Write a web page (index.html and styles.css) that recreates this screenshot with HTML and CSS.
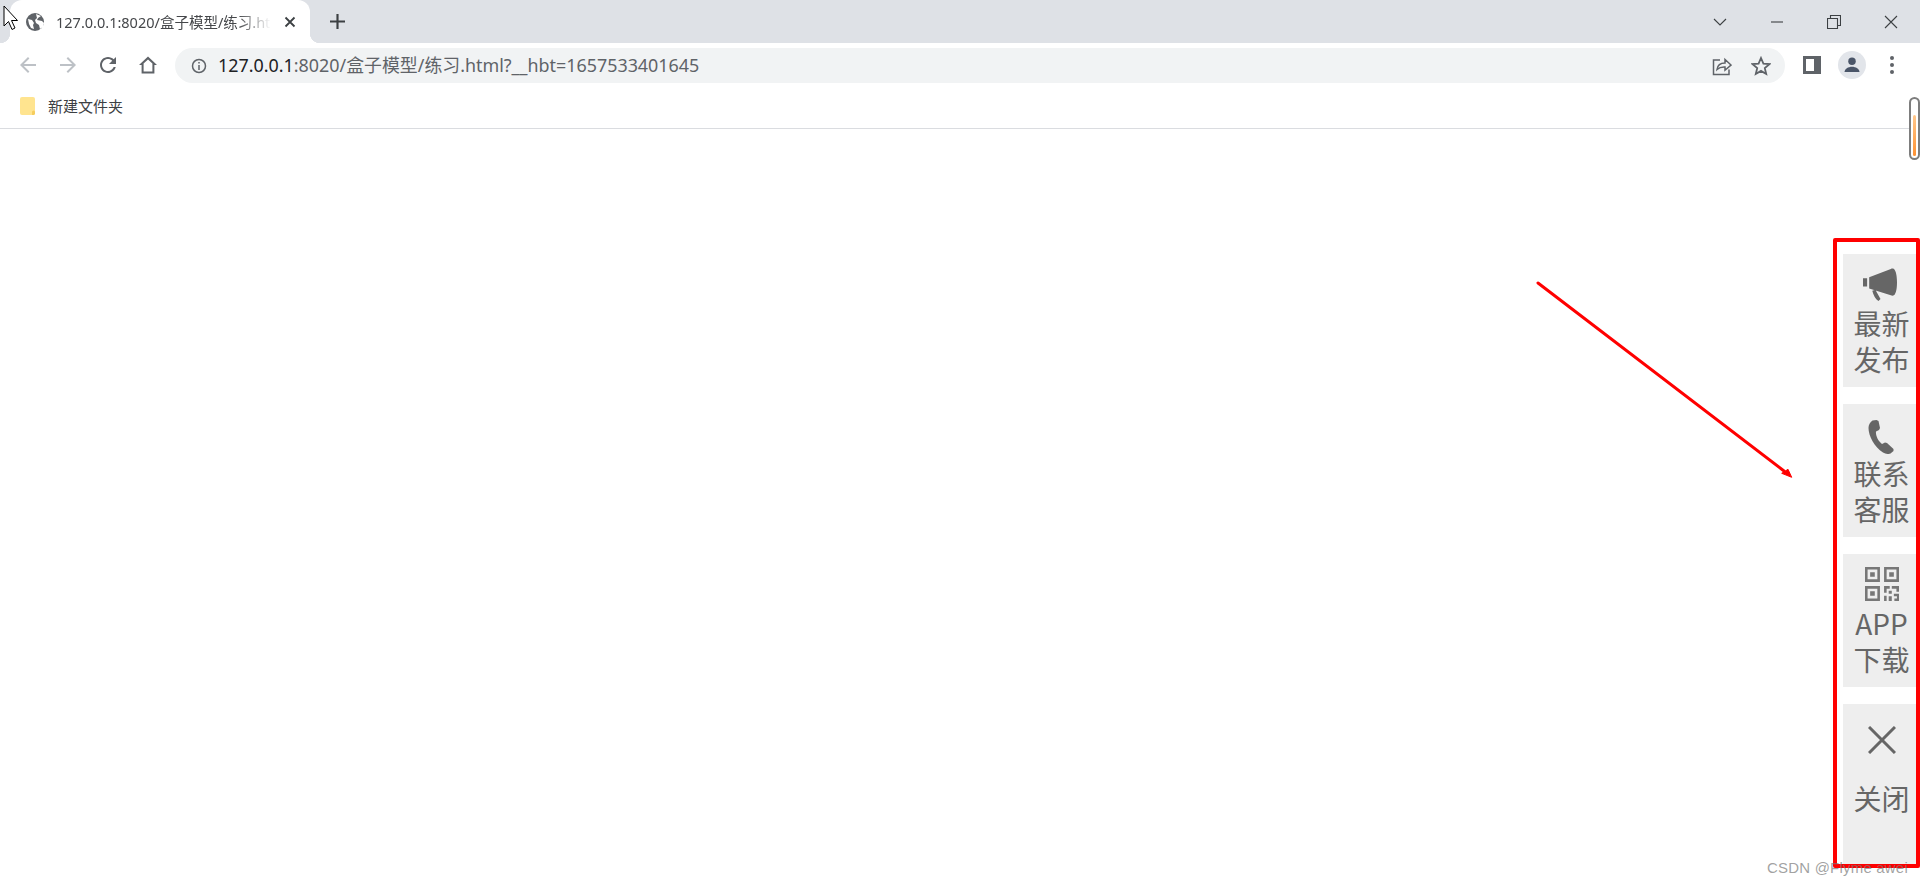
FILE: index.html
```
<!DOCTYPE html>
<html lang="zh">
<head>
<meta charset="utf-8">
<title>练习</title>
<link rel="stylesheet" href="styles.css">
</head>
<body>
<header class="chrome">
  <div class="tabstrip">
    <div class="tab">
      <svg class="favicon" viewBox="0 0 18 18"><circle cx="9" cy="9" r="9" fill="#5f6368"/><path d="M2 6l4 1 2 3-1 2 1 4-3-1-2-4zM10 1l5 2-3 2-1 2 5 1 2 2-1 4-3 2-1-4-3-2-1-3 2-2z" fill="#fff"/></svg>
      <span class="tab-title">127.0.0.1:8020/盒子模型/练习.html</span>
      <svg class="tab-close" viewBox="0 0 12 12"><path d="M1.5 1.5l9 9M10.5 1.5l-9 9"/></svg>
    </div>
    <svg class="newtab" viewBox="0 0 14 14"><path d="M7 0v14M0 7h14"/></svg>
    <div class="winctl">
      <svg class="winicon" viewBox="0 0 14 8"><path d="M1 1l6 6 6-6"/></svg>
      <svg class="winicon" viewBox="0 0 14 14"><path d="M1 7h12"/></svg>
      <svg class="winicon" viewBox="0 0 14 14"><path d="M.5 3.500h10v10H.5zM3.500 3.500v-3h10v10h-3"/></svg>
      <svg class="winicon" viewBox="0 0 14 14"><path d="M1 1l12 12M13 1L1 13"/></svg>
    </div>
  </div>
  <div class="toolbar">
    <svg class="tb-icon dim" viewBox="0 0 24 24"><path d="M20 11H7.83l5.59-5.59L12 4l-8 8 8 8 1.41-1.41L7.83 13H20v-2z"/></svg>
    <svg class="tb-icon dim" viewBox="0 0 24 24"><path d="M4 11h12.17l-5.59-5.59L12 4l8 8-8 8-1.41-1.41L16.17 13H4v-2z"/></svg>
    <svg class="tb-icon" viewBox="0 0 24 24"><path d="M17.65 6.35C16.2 4.9 14.21 4 12 4c-4.42 0-7.99 3.58-7.99 8s3.57 8 7.99 8c3.73 0 6.84-2.55 7.73-6h-2.08c-.82 2.33-3.04 4-5.65 4-3.31 0-6-2.69-6-6s2.69-6 6-6c1.66 0 3.14.69 4.22 1.78L13 11h7V4l-2.35 2.35z"/></svg>
    <svg class="tb-icon" viewBox="0 0 24 24"><path d="M12 3.5L3 12h2.6v8.5h12.8V12H21zM12 6.4l4.4 4.2v7.9H7.6v-7.9z"/></svg>
    <div class="omnibox">
      <svg class="info" viewBox="0 0 16 16"><circle cx="8" cy="8" r="6.5"/><path d="M8 7v5M8 4v1.6"/></svg>
      <span class="url"><span class="host">127.0.0.1</span>:8020/盒子模型/练习.html?__hbt=1657533401645</span>
      <svg class="omni-icon share" viewBox="0 0 20 20"><path d="M8 4H1.5v14.5H17v-5M5 13.5c.5-4 3.5-6.5 8-6.5V3.5l6 5.5-6 5.2V11c-3.5-.2-6 .6-8 2.500z"/></svg>
      <svg class="omni-icon star" viewBox="0 0 20 20"><path d="M10 2l2.400 5.600 6 .5-4.600 4 1.400 5.900L10 14.900 4.800 18l1.400-5.900-4.600-4 6-.5z"/></svg>
    </div>
    <div class="sidepanel"></div>
    <div class="avatar"><svg viewBox="0 0 24 24"><circle cx="12" cy="7.500" r="4.500"/><path d="M3 20.500c0-4 4.500-6.500 9-6.500s9 2.500 9 6.500z"/></svg></div>
    <div class="dots"><i></i><i></i><i></i></div>
  </div>
  <div class="bookmarks">
    <svg class="folder" viewBox="0 0 15 18"><path d="M2 0h11a2 2 0 0 1 2 2v14a2 2 0 0 1-2 2H2a2 2 0 0 1-2-2V2a2 2 0 0 1 2-2z" fill="#ffe48f"/><path d="M12 18v-3a1.500 1.500 0 0 1 3 0v2l-1 1z" fill="#f6cd5e"/></svg>
    <span class="bm-label">新建文件夹</span>
  </div>
</header>
<main class="page">
  <aside class="rail">
    <div class="card">
      <svg class="card-icon horn" viewBox="0 0 33 33"><path d="M0 10h4v8H0zM6 9L27 1c1-.5 2-.6 3 0 2 1.500 3 7 3 13s-1 11-3 12.500c-1 .6-2 .5-3 0L6 20zM9 22l3-1 5 9-2 2c-3-2-5-6-6-10z"/></svg>
      <div class="card-text">最新<br>发布</div>
    </div>
    <div class="card">
      <svg class="card-icon phone" viewBox="0 0 25 34"><path d="M4 .5L8 0l2 1 1.500 7-1 2-3 1.500c-.5 4 2 9.500 6 12.500l3-1.500 2 .5L25 29v2l-3 2.500c-2 1-5 .5-7.500-1C6 27 0 16 0 8c0-3 1.500-6 4-7.500z"/></svg>
      <div class="card-text">联系<br>客服</div>
    </div>
    <div class="card">
      <svg class="card-icon qr" viewBox="0 0 33 33"><path class="qr-line" d="M1.250 1.250h12v12h-12zM19.750 1.250h12v12h-12zM1.250 19.750h12v12h-12z"/><path d="M5 5h4.500v4.500H5zM23.500 5H28v4.500h-4.500zM5 23.500h4.500V28H5zM18.500 18.500H24V21h-3v4h-2.500zM26 18.500h7V24h-2.500v-3H26zM23 23h3v3h-3zM18.500 28H21v5h-2.500zM23 28.500h3V33h-3zM28 26h5v7h-4.500v-2.500H31V28.500h-3z"/></svg>
      <div class="card-text">APP<br>下载</div>
    </div>
    <div class="card card-close">
      <svg class="card-icon x" viewBox="0 0 28 28"><path d="M1 1l26 26M27 1L1 27"/></svg>
      <div class="card-text spaced">关闭</div>
    </div>
  </aside>
</main>
<div class="scroll-mark"><div class="scroll-fill"></div></div>
<svg class="arrow" viewBox="0 0 262 200"><path class="arrow-line" d="M2 2L248 190"/><path class="arrow-head" d="M255.700 196.300L245.700 192.300 252 188.300z"/></svg>
<div class="red-box"></div>
<div class="watermark">CSDN @Flyme awei</div>
<svg class="cursor" viewBox="0 0 15 26"><path d="M1 1v20l4.500-4.500 3.500 8 3-1.500-3.500-7.500h6z"/></svg>
</body>
</html>
```

FILE: styles.css
```
* { box-sizing: border-box; }
html, body { margin: 0; height: 886px; overflow: hidden; background: #fff; }
body { position: relative; font-family: "Noto Sans", "Noto Sans CJK SC", sans-serif; }

.chrome { display: flex; flex-direction: column; height: 129px; border-bottom: 1px solid #dadce0; }

.tabstrip { display: flex; align-items: center; height: 43px; background: #dee1e6; padding-left: 10px; }
.tab { position: relative; display: flex; align-items: center; align-self: stretch; width: 300px; padding: 0 14px 0 16px; background: #fff; border-radius: 12px 12px 0 0; }
.tab::before, .tab::after { content: ""; position: absolute; bottom: 0; width: 10px; height: 10px; }
.tab::before { left: -10px; background: radial-gradient(circle at 0 0, #dee1e6 10px, #fff 10.500px); }
.tab::after { right: -10px; background: radial-gradient(circle at 100% 0, #dee1e6 10px, #fff 10.500px); }
.favicon { width: 18px; height: 18px; flex: none; margin-top: 1px; }
.tab-title { flex: none; width: 217px; margin-left: 12px; font-size: 14.500px; color: #45474a; white-space: nowrap; overflow: hidden; -webkit-mask-image: linear-gradient(to right, #000 84%, transparent 99%); mask-image: linear-gradient(to right, #000 84%, transparent 99%); }
.tab-close { width: 12px; height: 12px; margin-left: 11px; fill: none; stroke: #3c4043; stroke-width: 1.800; }
.newtab { width: 15px; height: 15px; margin-left: 20px; fill: none; stroke: #3c4043; stroke-width: 2; }
.winctl { display: flex; align-items: center; margin-left: auto; padding-right: 22px; gap: 43px; }
.winicon { width: 14px; height: 14px; fill: none; stroke: #3c4043; stroke-width: 1.100; }

.toolbar { display: flex; align-items: center; height: 45px; background: #fff; padding-left: 16px; }
.tb-icon { width: 24px; height: 24px; margin: 0 16px 2px 0; fill: #5f6368; flex: none; }
.tb-icon.dim { fill: #bdc1c6; }
.omnibox { display: flex; align-items: center; width: 1610px; height: 35px; margin-left: -1px; padding: 0 14px 0 16px; background: #f1f3f4; border-radius: 18px; }
.info { width: 16px; height: 16px; fill: none; stroke: #5f6368; stroke-width: 1.500; flex: none; }
.url { margin: 0 0 3px 11px; font-size: 17.900px; color: #5f6368; white-space: nowrap; }
.host { color: #202124; }
.omni-icon { flex: none; width: 20px; height: 20px; fill: none; stroke: #5f6368; stroke-width: 1.500; }
.share { margin-left: auto; }
.star { margin-left: 19px; stroke-width: 1.800; }
.sidepanel { width: 18px; height: 18px; margin: 0 0 2px 18px; border: 3px solid #5f6368; border-right-width: 7px; background: #fff; flex: none; }
.avatar { display: flex; align-items: center; justify-content: center; width: 28px; height: 28px; margin: 0 0 2px 17px; border-radius: 50%; background: #e2e5ea; flex: none; }
.avatar svg { width: 20px; height: 20px; fill: #4a5568; }
.dots { display: flex; flex-direction: column; gap: 3px; margin: 0 0 2px 24px; }
.dots i { display: block; width: 4px; height: 4px; border-radius: 50%; background: #5f6368; }

.bookmarks { display: flex; align-items: center; flex: 1; padding: 0 0 4px 20px; background: #fff; }
.folder { width: 15px; height: 18px; }
.bm-label { margin: 0 0 1px 13px; font-size: 15px; color: #3c4043; }

.page { display: flex; justify-content: flex-end; height: 757px; }
.rail { display: flex; flex-direction: column; gap: 17px; width: 77px; padding-top: 125px; }
.card { display: flex; flex-direction: column; align-items: center; height: 133px; padding-top: 10px; background: #eee; color: #666; }
.card-close { height: 164px; padding-top: 16px; }
.card-icon { display: block; height: 34px; width: 34px; margin: 3px 0; fill: #666; flex: none; }
.card-icon.horn { margin: 4px 4px 2px 0; }
.card-icon.phone { margin: 6px 2px 0 0; }
.card-icon.qr { fill: #777; }
.qr-line { fill: none; stroke: #777; stroke-width: 2.500; }
.card-icon.x { height: 28px; width: 28px; margin: 6px 0; fill: none; stroke: #666; stroke-width: 3; }
.card-text { margin-top: 1px; font-family: "Noto Sans CJK SC", sans-serif; font-size: 28px; line-height: 36px; text-align: center; }
.card-text.spaced { margin-top: 20px; }

.scroll-mark { position: absolute; left: 1909px; top: 97px; width: 11px; height: 63px; padding: 16px 2px 2px; border: 2px solid #7d7d7d; border-radius: 6px; background: #fff; }
.scroll-fill { height: 100%; border-radius: 3px; background: linear-gradient(#ffc78c, #ff9233); }
.arrow { position: absolute; left: 1536px; top: 281px; width: 262px; height: 200px; }
.arrow-line { fill: none; stroke: #f00; stroke-width: 3; stroke-linecap: round; }
.arrow-head { fill: #f00; stroke: #f00; }
.red-box { position: absolute; left: 1833px; top: 238px; width: 87px; height: 630px; border: 4px solid #f00; border-radius: 2px; }
.watermark { position: absolute; left: 1767px; top: 858px; font-family: "Liberation Sans", sans-serif; font-size: 15px; line-height: 20px; letter-spacing: .2px; color: rgba(120,120,120,.7); white-space: nowrap; }
.cursor { position: absolute; left: 3px; top: 5px; width: 15px; height: 26px; fill: #fff; stroke: #000; stroke-width: 1; }
```
